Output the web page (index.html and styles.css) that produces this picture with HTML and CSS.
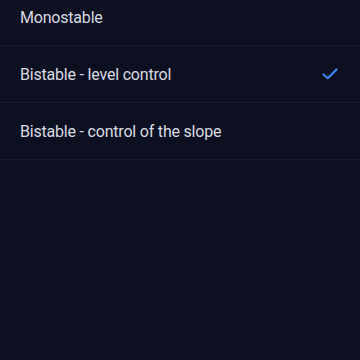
FILE: index.html
```html
<!DOCTYPE html>
<html>
<head>
<meta charset="utf-8">
<link rel="stylesheet" href="styles.css">
</head>
<body>
<ul class="list">
  <li class="row"><span class="label">Monostable</span></li>
  <li class="row"><span class="label">Bistable - level control</span>
    <svg class="check" width="16" height="12" viewBox="0 0 16 12"><path d="M1.5 6.5 L5.8 10.3 L14.5 1.5" fill="none" stroke="#3d86ee" stroke-width="2.2" stroke-linecap="round" stroke-linejoin="round"/></svg>
  </li>
  <li class="row"><span class="label">Bistable - control of the slope</span></li>
</ul>
</body>
</html>
```
FILE: styles.css
```css
html, body {
  margin: 0;
  padding: 0;
  background: #0c1020;
  height: 100%;
}
body {
  font-family: Roboto, "Noto Sans", sans-serif;
  color: #dadbe2;
  overflow: hidden;
}
.list {
  list-style: none;
  margin: -11px 0 0 0;
  padding: 0;
}
.row {
  height: 56px;
  border-bottom: 1px solid #171b2b;
  display: flex;
  align-items: center;
  justify-content: space-between;
  padding: 0 22px 0 20px;
}
.label {
  font-size: 16px;
  letter-spacing: -0.2px;
}
.check {
  display: block;
}
```
